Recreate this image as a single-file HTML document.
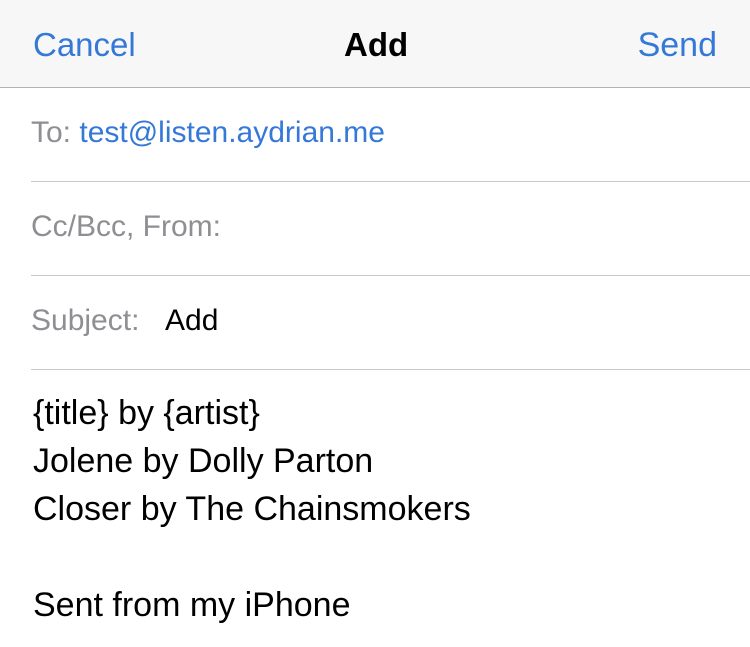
<!DOCTYPE html>
<html><head><style>
body{margin:0;width:750px;height:647px;background:#fff;font-family:"Liberation Sans",sans-serif;position:relative;overflow:hidden}
.nav{position:absolute;left:0;top:0;width:750px;height:87px;background:#f7f7f7;border-bottom:1px solid #b2b2b2}
.t{position:absolute;white-space:nowrap}
.line{position:absolute;left:31px;right:0;height:1px;background:#c8c7cc}
.g{color:#8e8e93}
.b{color:#3478d8}
</style></head><body>
<div class="nav"></div>
<div class="t b" style="left:33px;top:26px;font-size:33px">Cancel</div>
<div class="t" style="left:344px;top:26px;font-size:33px;font-weight:bold">Add</div>
<div class="t b" style="right:33px;top:26px;font-size:34px">Send</div>
<div class="t" style="left:31px;top:116px;font-size:30px"><span class="g">To:</span> <span class="b">test@listen.aydrian.me</span></div>
<div class="line" style="top:181px"></div>
<div class="t g" style="left:31px;top:210px;font-size:30px">Cc/Bcc, From:</div>
<div class="line" style="top:275px"></div>
<div class="t g" style="left:31px;top:304px;font-size:30px">Subject:</div>
<div class="t" style="left:165px;top:304px;font-size:30px">Add</div>
<div class="line" style="top:369px"></div>
<div class="t" style="left:33px;top:389px;font-size:34px;line-height:48px">{title} by {artist}<br>Jolene by Dolly Parton<br>Closer by The Chainsmokers<br><br>Sent from my iPhone</div>
</body></html>
